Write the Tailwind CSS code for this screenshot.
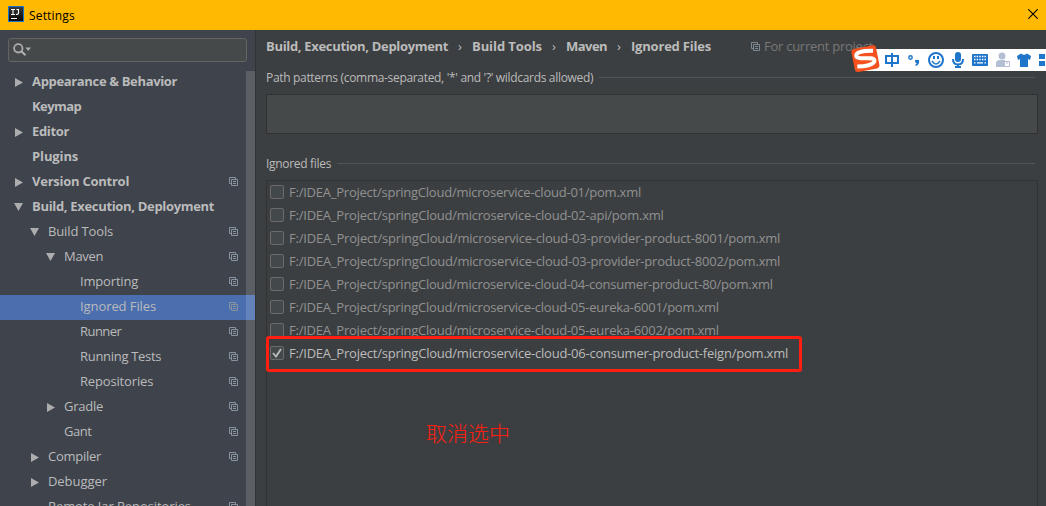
<!DOCTYPE html>
<html lang="en"><head><meta charset="utf-8"><title>Settings</title>
<script src="https://cdn.jsdelivr.net/npm/@tailwindcss/browser@4"></script></head>
<body class="relative flex h-[506px] w-[1046px] flex-col overflow-hidden bg-[#3c3f41] font-['Open_Sans','Noto_Sans_CJK_SC',sans-serif] text-[13px] leading-[25px] text-[#bbbbbb]">
<svg class="hidden"><symbol id="copy" viewBox="0 0 9 9"><path d="M2 6.500H.5V.5H6.500V2M2.500 2.500H8.500V8.500H2.500ZM4 4.500H7M4 6.500H7" fill="none" stroke="currentColor"/></symbol>
<symbol id="right" viewBox="0 0 8 9"><path d="M0 0L8 4.5L0 9Z" fill="#adadad"/></symbol>
<symbol id="down" viewBox="0 0 9 8"><path d="M0 0H9L4.5 8Z" fill="#adadad"/></symbol></svg>

<header class="flex h-[30px] shrink-0 items-center bg-[#ffb900] pl-2 pr-[8px] text-black">
  <svg class="mb-[2px] size-4" viewBox="0 0 16 16"><defs><linearGradient id="g" x2="0" y2="1"><stop stop-color="#3a3a3a"/><stop offset="1" stop-color="#080808"/></linearGradient></defs><path d="M.5.5H15.5V15.5H.5Z" fill="url(#g)" stroke="#1674d8"/><path d="M3 3.500H7M5 3.500V8.500M3 8.500H7M8.500 3.500H11M10.500 3V7Q10.500 8.500 8 8.500M3 12.500H9" fill="none" stroke="#fff" stroke-width="1.1"/></svg>
  <span class="ml-[5px] text-[12px] tracking-[0.17px]">Settings</span>
  <svg class="mb-[2px] ml-auto size-[10px]" viewBox="0 0 10 10"><path d="M.3.3L9.7 9.7M9.7.3L.3 9.7" stroke="#000" stroke-width="1.1"/></svg>
</header>

<div class="flex min-h-0 flex-1">
  <aside class="flex w-[256px] shrink-0 flex-col border-r border-[#313335] bg-[#3e434c]">
    <div class="mt-2 ml-2 flex h-6 w-[239px] shrink-0 items-start rounded-[3px] border border-[#646464] bg-[#454949] pt-1 pl-1">
      <svg class="h-[14px] w-[19px]" viewBox="0 0 19 14"><circle cx="5.3" cy="5.3" r="4.2" fill="none" stroke="#adadad" stroke-width="1.8"/><path d="M8.3 8.3L12.5 12.3" stroke="#adadad" stroke-width="2.2"/><path d="M12.5 4.5H18L15.2 8Z" fill="#adadad"/></svg>
    </div>
    <div class="mt-2 flex min-h-0 flex-1">
      <ul id="tree" class="w-full overflow-hidden whitespace-nowrap"></ul>
    </div>
  </aside>

  <main class="flex min-w-0 flex-1 flex-col overflow-hidden pl-[10px] pr-2">
    <nav class="mt-1 flex h-[25px] items-center whitespace-nowrap font-bold">
      <span class="w-[192px] tracking-[-0.32px]">Build, Execution, Deployment</span><span class="w-[14px] font-normal">›</span>
      <span class="w-[80px] tracking-[-0.08px]">Build Tools</span><span class="w-[14px] font-normal">›</span>
      <span class="w-[51px] tracking-[-0.54px]">Maven</span><span class="w-[14px] font-normal">›</span>
      <span class="w-[120px] tracking-[-0.2px]">Ignored Files</span>
      <svg class="size-[9px] text-[#7e8a93]"><use href="#copy"/></svg>
      <span class="ml-[4px] font-normal tracking-[-0.26px] text-[#777777]">For current project</span>
    </nav>
    <div class="mt-[9px] flex h-5 items-center gap-[6px] pr-[3px] text-[12px] leading-5"><span class="w-[327px] shrink-0 whitespace-nowrap tracking-[-0.32px]">Path patterns (comma-separated, '*' and '?' wildcards allowed)</span><i class="mb-px h-px flex-1 bg-[#515557]"></i></div>
    <div class="mt-[6px] h-10 shrink-0 border border-[#323232] bg-[#454949]"></div>
    <div class="mt-5 flex h-5 items-center gap-[6px] pr-[3px] text-[12px] leading-5"><span class="w-[65px] shrink-0 whitespace-nowrap tracking-[-0.31px]">Ignored files</span><i class="mb-px h-px flex-1 bg-[#515557]"></i></div>
    <ul id="files" class="mt-[6px] flex-1 border border-b-0 border-[#323232] whitespace-nowrap leading-[23px]"></ul>
  </main>
</div>

<div class="absolute left-[246px] top-[71px] h-[435px] w-[9px] bg-white/15"></div>
<div class="absolute left-[266px] top-[336px] h-[36px] w-[536px] rounded-[3px] border-3 border-[#ff1e10]"></div>
<div class="absolute left-[426px] top-[419px] font-['Noto_Sans_CJK_SC',sans-serif] text-[21px] font-light leading-[26px] text-[#ff1e10]">取消选中</div>

<svg class="absolute left-[846px] top-[38px] h-[42px] w-[200px]" viewBox="0 0 200 42">
  <path d="M10 11H200V33H10Z" fill="#fff"/>
  <g transform="rotate(-11 19 21)"><rect x="7" y="9" width="25" height="23.500" rx="3" fill="#f4511e"/><path d="M28.500 14.500Q11 11 11 16.500C11 21 28 19.500 28 24C28 29 16 28 10 27" fill="none" stroke="#fff" stroke-width="4"/></g>
  <g fill="none" stroke="#1f75c9" stroke-width="2"><path d="M40 18H52V25H40ZM46 15V29"/><circle cx="64.5" cy="19.5" r="1.7" stroke-width="1.4"/><circle cx="90" cy="22" r="7"/><path d="M86 23Q90 29 94 23" stroke-width="1.4"/><path d="M88 18V21M92 18V21"/><path d="M107 21Q107 26.500 112 26.500Q117 26.500 117 21M112 26V29M109 29H115"/></g>
  <g fill="#1f75c9"><path d="M69 22H73Q74 26 70 28L69 27Q71 26 70.500 25Q69 25 69 22"/><rect x="109" y="14" width="6" height="10" rx="3"/><rect x="126" y="16" width="16" height="12" rx="1"/><path d="M171 18L175 15.500Q178 18 181 15.500L185 18L184 22L182 21V29H174V21L172 22ZM193 16H199V21H193ZM193 23H199V28H193Z"/></g>
  <path d="M128 18.500H140M128 21.500H140" stroke="#fff" stroke-width="1.4" stroke-dasharray="1.500 1.120"/><path d="M128 24.800H129.500M131 24.800H137M138.500 24.800H140" stroke="#fff" stroke-width="1.3"/>
  <g fill="#b5bfd4"><circle cx="156" cy="18" r="3.500"/><path d="M150 29V25Q150 22 154 22H159V29Z"/><path d="M158.500 23.500H163.500V28.500H158.500Z" fill="#fff" stroke="#b5bfd4"/><path d="M161 23V26" stroke="#b5bfd4"/></g>
</svg>

<script>
// name, indent, arrow (r/d/none), bold, has project icon, letter-spacing
const rows=[["Appearance & Behavior",32,"r",1,0,-.34],["Keymap",32,"",1,0,-.55],["Editor",32,"r",1,0,-.33],["Plugins",32,"",1,0,-.12],["Version Control",32,"r",1,1,-.25],["Build, Execution, Deployment",32,"d",1,0,-.32],["Build Tools",48,"d",0,1,-.13],["Maven",64,"d",0,1,-.3],["Importing",80,"",0,1,-.17],["Ignored Files",80,"",0,1,-.08],["Runner",80,"",0,1,-.55],["Running Tests",80,"",0,1,-.3],["Repositories",80,"",0,1,-.16],["Gradle",64,"r",0,1,-.25],["Gant",64,"",0,1,-.5],["Compiler",48,"r",0,1,-.26],["Debugger",48,"r",0,0,-.06],["Remote Jar Repositories",48,"",0,1,-.09]];
document.getElementById('tree').innerHTML=rows.map(([t,x,a,b,p,s])=>`<li class="flex h-[25px] items-center ${t==='Ignored Files'?'bg-[#4b6eaf]':''}"><span class="flex shrink-0 justify-end pr-[9px]" style="width:${x}px">${a?`<svg class="${a==='r'?'h-[9px] w-2':'mb-px h-2 w-[9px]'}"><use href="#${a==='r'?'right':'down'}"/></svg>`:''}</span><span class="mb-[2px] ${b?'font-bold':''}" style="letter-spacing:${s}px">${t.replace('&','&amp;')}</span>${p?'<svg class="mr-[17px] mb-[2px] ml-auto size-[9px] text-[#87939f]"><use href="#copy"/></svg>':''}</li>`).join('');
const files=[["01",-.235],["02-api",-.22],["03-provider-product-8001",-.2],["03-provider-product-8002",-.2],["04-consumer-product-80",-.23],["05-eureka-6001",-.225],["05-eureka-6002",-.225],["06-consumer-product-feign",-.22]];
document.getElementById('files').innerHTML=files.map(([f,s],i)=>`<li class="flex h-[23px] items-center pl-[3px] ${i===7?'text-[#bbbbbb]':'text-[#919191]'}" style="letter-spacing:${s}px"><span class="mr-[5px] mb-px flex size-[14px] items-center justify-center rounded-[2px] border border-[#6b6b6b] bg-[#43484a]">${i===7?'<svg class="size-[10px]" viewBox="0 0 10 10"><path d="M1 5L4 8.500L9 1" fill="none" stroke="#bbb" stroke-width="1.900"/></svg>':''}</span>F:/IDEA_Project/springCloud/microservice-cloud-${f}/pom.xml</li>`).join('');
</script>
</body></html>
